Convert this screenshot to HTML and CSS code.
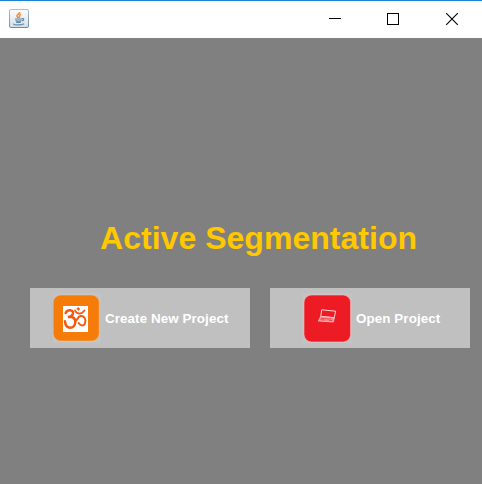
FILE: index.html
```html
<!DOCTYPE html>
<html lang="en">
<head>
<meta charset="utf-8">
<title>Active Segmentation</title>
<link rel="stylesheet" href="styles.css">
</head>
<body>
<div class="window">
  <header class="titlebar">
    <svg class="app-icon" width="20" height="19" viewBox="0 0 20 19" fill="none">
      <defs><linearGradient id="tile" x2="0" y2="1"><stop stop-color="#fbfcfd"/><stop offset="1" stop-color="#d3e0e9"/></linearGradient>
      <linearGradient id="edge" x2="0" y2="1"><stop stop-color="#b3bdc5"/><stop offset="1" stop-color="#6c8ba3"/></linearGradient></defs>
      <rect x=".5" y=".5" width="19" height="18" rx="1.5" fill="url(#tile)" stroke="url(#edge)"/>
      <path d="M10.7 3C11 5 7.2 5.4 8 7.3L9.4 9M12 5.3C8.8 6.5 11.7 7.2 10 9" stroke="#ef9145" stroke-width="1.6"/>
      <path d="M6 10h7M6.5 11.5q3 1.2 6 0M7 13q2.3 1 4.8 0M13 9.7c2.6-.6 2 1.9 0 2.2" stroke="#5d83a0" stroke-width="1.2"/>
      <path d="M4.5 14.6c-1 1.7 8.5 1.8 10.5.1" stroke="#6d91ab" stroke-width="1.2"/>
    </svg>
    <div class="controls">
      <svg width="58" height="37" viewBox="0 0 58 37" shape-rendering="crispEdges"><path d="M19 17.5h12" stroke="#000"/></svg>
      <svg width="58" height="37" viewBox="0 0 58 37" shape-rendering="crispEdges"><rect x="19.5" y="12.5" width="11" height="11" fill="none" stroke="#000"/></svg>
      <svg width="58" height="37" viewBox="0 0 58 37"><path d="M20.2 12.2l11.6 11.6M31.8 12.2L20.2 23.8" stroke="#000" stroke-width="1.1"/></svg>
    </div>
  </header>
  <main class="content">
    <h1 class="title">Active Segmentation</h1>
    <div class="actions">
      <button class="action create">
        <svg width="48" height="50" viewBox="0 0 48 50" fill="none">
          <rect width="48" height="50" fill="#c3c3c3"/>
          <rect x=".2" y="2" width="46" height="46" rx="7.5" fill="#f67c09" stroke="#dfc9b2" stroke-width=".5"/>
          <rect x="10" y="13" width="25" height="26" fill="#fff"/>
          <g transform="translate(10 13) scale(.3333)" stroke="#f25a12" stroke-width="6" stroke-linecap="round">
            <path d="M8 21C13 8 32 11 30 22C28 30 20 33 15 33C27 29 38 37 37 48C36 70 8 72 6 46" stroke-width="7.5"/>
            <path d="M36 45C44 45 43 32 52 30C65 28 71 43 65 54C60 62 51 58 47 51"/>
            <path d="M36 13C42 26 56 26 65 13" stroke-width="5"/>
            <path d="M46 4l5 5-5 5-5-5z" fill="#f25a12" stroke-width="1"/>
          </g>
        </svg>
        <span>Create New Project</span>
      </button>
      <button class="action open">
        <svg width="50" height="50" viewBox="0 0 50 50" fill="none">
          <rect width="50" height="50" fill="#c3c3c3"/>
          <rect x="2" y="2" width="46.6" height="47" rx="7.5" fill="#ed1c24" stroke="#f1c5c7" stroke-width=".6"/>
          <path d="M19.7 16.8L33.6 18.2 32.3 24.6 18.8 23.4z" stroke="#ffd3d4" stroke-width="1"/>
          <path d="M18.6 23.6L32.3 24.9 31.3 29 16.4 28z" fill="#f58a8e" stroke="#ffc6c8" stroke-width=".8"/>
          <path d="M19 25.2l10 .8M18.5 26.7l4 .3M27 27.3l3 .2" stroke="#ed3940" stroke-width=".8"/>
        </svg>
        <span>Open Project</span>
      </button>
    </div>
  </main>
</div>
</body>
</html>
```

FILE: styles.css
```css
* { box-sizing: border-box; }
body { margin: 0; overflow: hidden; font-family: "Liberation Sans", Arial, sans-serif; }
.window { width: 482px; height: 484px; display: flex; flex-direction: column; background: #808080; }
.titlebar { height: 38px; flex: none; display: flex; justify-content: space-between; background: #fff; border-top: 1px solid #1883d7; }
.app-icon { margin: 8px 0 0 9px; }
.controls { display: flex; margin-right: -2px; }
.controls svg { display: block; }
.content { padding: 180px 12px 0 30px; }
.title { margin: 0 0 0 70px; font-size: 32px; line-height: 40px; letter-spacing: .03px; font-weight: bold; color: #ffc800; white-space: nowrap; }
.actions { display: flex; gap: 20px; margin-top: 30px; }
.action { height: 60px; padding: 0; border: 0; display: flex; align-items: center; background: #c0c0c0; color: #fff; font: bold 13.4px/16px "Liberation Sans", Arial, sans-serif; letter-spacing: .08px; white-space: nowrap; }
.action svg { display: block; flex: none; }
.action span { padding-top: 2px; }
.create { width: 220px; padding-left: 23px; gap: 4px; }
.open { width: 200px; padding-left: 32px; gap: 4px; }
```
